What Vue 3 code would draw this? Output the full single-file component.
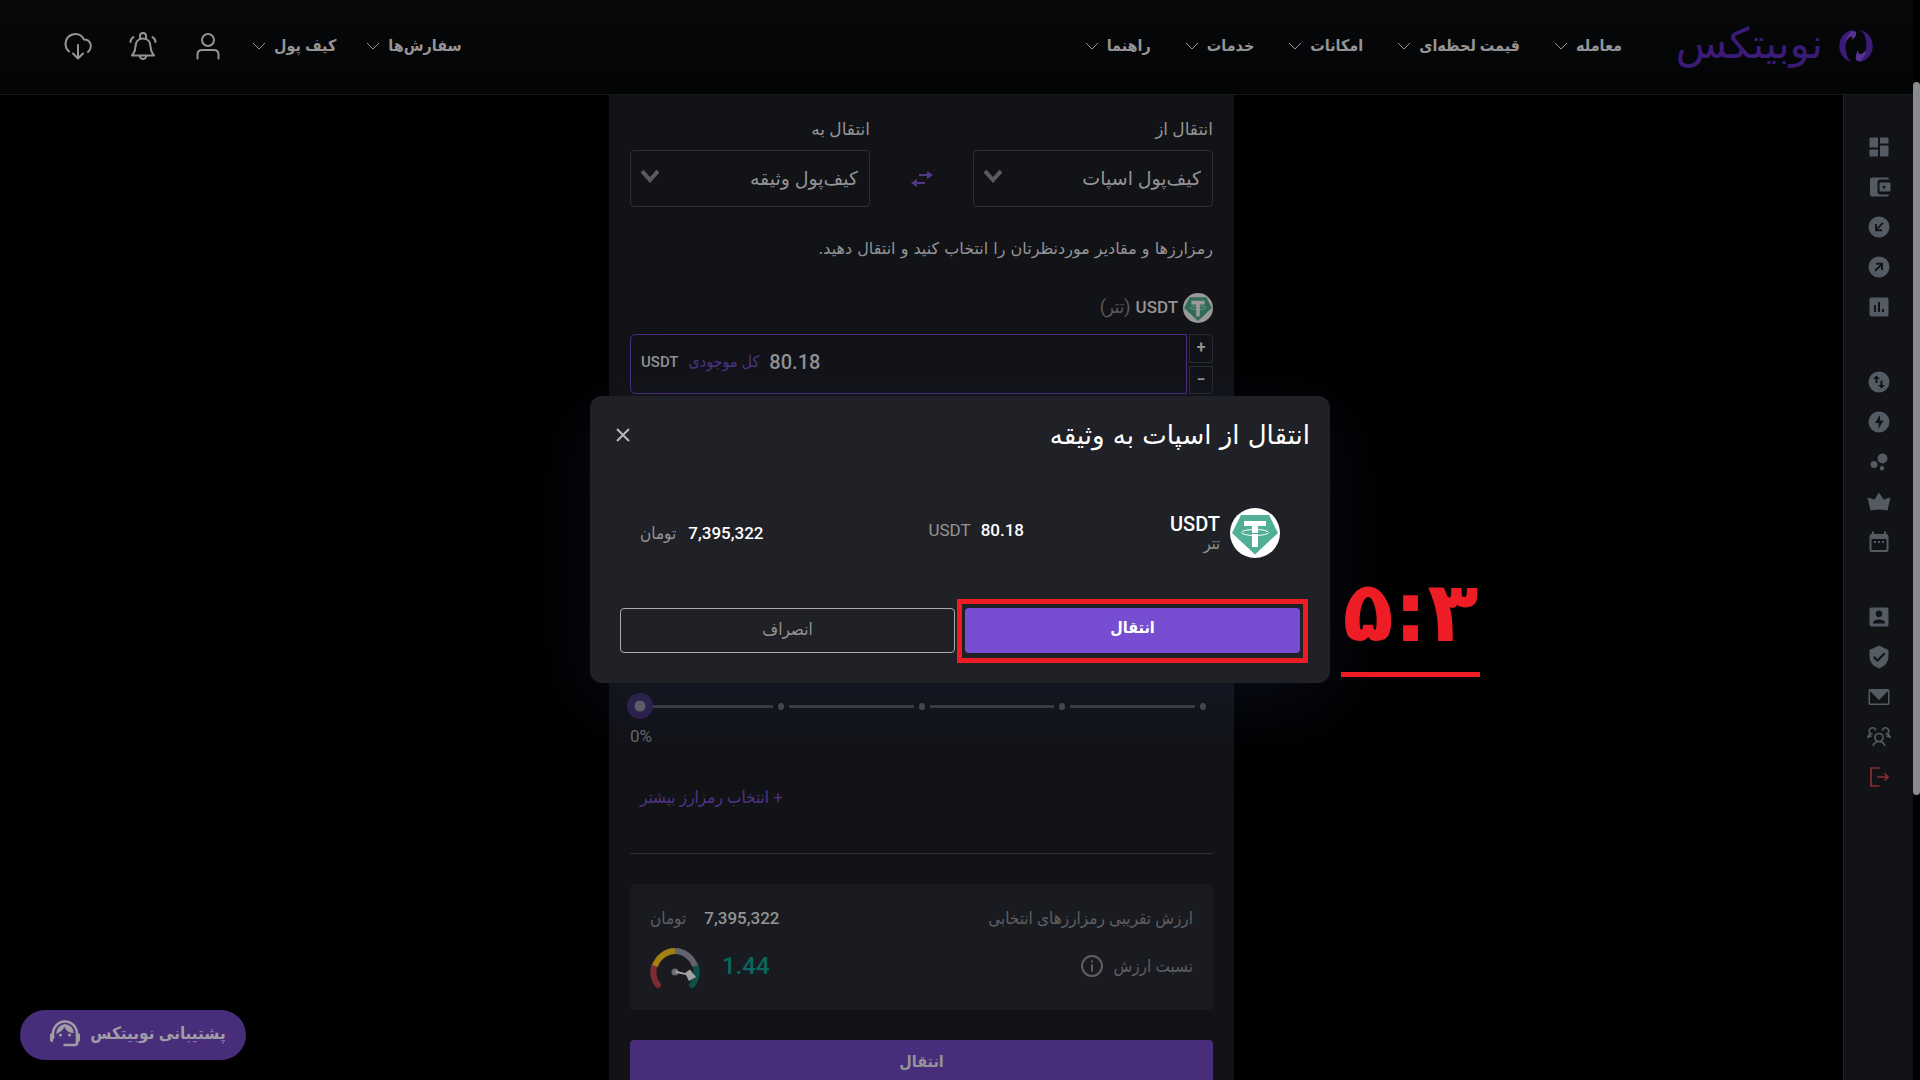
<script setup>
import { ref } from 'vue'

const mainNav = ['معامله', 'قیمت لحظه‌ای', 'امکانات', 'خدمات', 'راهنما']
const userNav = ['سفارش‌ها', 'کیف پول']

const sideGroups = [
  [
    { name: 'داشبورد', d: 'M3.500 2.500H11v10H2.500v-9q0-1 1-1zM13 2.500h7.500q1 0 1 1v5H13zM13 10.500h8.500v10q0 1-1 1H13zM2.500 14.500H11v7H3.500q-1 0-1-1z' },
    { name: 'کیف پول', d: 'M5 2.500h15q2 0 2 2h-8.500a3 3 0 0 0-3 3v9a3 3 0 0 0 3 3H22q0 2-2 2H5q-2 0-2-2v-15q0-2 2-2zM13.500 7.500h9q1 0 1 1v7q0 1-1 1h-9q-1 0-1-1v-7q0-1 1-1zM17 10.500a1.500 1.500 0 1 0 0 3a1.500 1.500 0 0 0 0-3z' },
    { name: 'واریز', d: 'M12 1.500a10.500 10.500 0 1 0 0 21a10.500 10.500 0 0 0 0-21zM15.200 7.200L16.600 8.600l-5.600 5.600H15v2H8V9h2v3.800z' },
    { name: 'برداشت', d: 'M12 1.500a10.500 10.500 0 1 0 0 21a10.500 10.500 0 0 0 0-21zM9 7.800h7V15h-2v-3.800L8.800 16.400 7.400 15l5.600-5.200H9z' },
    { name: 'گزارش', d: 'M4.500 2.500h15q2 0 2 2v15q0 2-2 2h-15q-2 0-2-2v-15q0-2 2-2zM7 10v7h2v-7zM11 7v10h2V7zM15 14v3h2v-3z' }
  ],
  [
    { name: 'تبدیل', d: 'M12 1.500a10.500 10.500 0 1 0 0 21a10.500 10.500 0 0 0 0-21zM6 9l3.500-3.500L13 9h-2.500v4h-2V9zM13.500 10.500v4.500H11l3.500 3.500L18 15h-2.500v-4.500z' },
    { name: 'برق‌آسا', d: 'M12 1.500a10.500 10.500 0 1 0 0 21a10.500 10.500 0 0 0 0-21zM13 5v5.500h3.500L11.500 19v-6H8z' },
    { name: 'استخر', d: 'M15.500 3.500a5 5 0 1 0 0 10a5 5 0 0 0 0-10zM7 11a3.500 3.500 0 1 0 0 7a3.500 3.500 0 0 0 0-7zM15 16a2.200 2.200 0 1 0 0 4.400a2.200 2.200 0 0 0 0-4.400z' },
    { name: 'باشگاه', d: 'M12 2.500l4.500 7L23.500 7.500l-3 13q-8.500-2-17 0l-3-13 7 2z' },
    { name: 'تقویم', d: 'M5 4V1.500h2V4h10V1.500h2V4q2.500 0 2.500 2v14q0 2-2 2h-15q-2 0-2-2V6q0-2 2.500-2zM4.500 9v11h15V9zM7 11h2v2H7zM11 11h2v2h-2zM15 11h2v2h-2z' }
  ],
  [
    { name: 'پروفایل', d: 'M4.500 2.500h15q2 0 2 2v15q0 2-2 2h-15q-2 0-2-2v-15q0-2 2-2zM12 5.500a3.200 3.200 0 1 0 0 6.400A3.200 3.200 0 0 0 12 5.500zM6 18.500h12v-1q-1-3-6-3t-6 3z' },
    { name: 'امنیت', d: 'M12 .500l9.500 4.500v6.500Q21.500 20 12 23.500 2.500 20 2.500 11.500V5zM7.500 11L6 12.500l4.500 4.500L18.500 9 17 7.500l-6.500 6.500z' },
    { name: 'پیام‌ها', d: 'M3 4h18q1.500 0 1.500 1.500v13q0 1.500-1.500 1.500H3q-1.500 0-1.500-1.500v-13Q1.500 4 3 4zM3 6v12.500h18V6l-9 9z' },
    { name: 'دعوت دوستان', line: 'M12 8.500a4 4 0 1 0 0 8a4 4 0 0 0 0-8M6 21q1.500-4.500 6-4.500t6 4.500M8.800 5.500A3.300 3.300 0 1 0 4 9Q1.500 9.500 1 12l3.500-1M15.200 5.500A3.300 3.300 0 1 1 20 9q2.500.500 3 3l-3.500-1' },
    { name: 'خروج', line: 'M12.500 3H4v18h8.500M10 12h11M17.500 8.500L21 12l-3.500 3.500', exit: true }
  ]
]

const from = ref('spot')
const to = ref('margin')
const amount = ref('80.18')
const percent = ref(0)
</script>

<template>
  <div class="page" dir="rtl">
    <header class="topbar">
      <a href="#" class="logo">
        <svg class="logo-mark" viewBox="0 0 34 32" aria-hidden="true">
          <path fill="#3b1a78" d="M13 0C-4 4-4 28 13 32 4 26 4 6 16 1zM21 32c17-4 17-28 0-32 9 6 9 26-3 31z" />
          <path fill="#56348f" d="M7 12C8 3 14-1 17 2q1 5-4 8c2-5-3-4-6 2zM27 20c-1 9-7 13-10 10q-1-5 2-10c0 6 4 5 8 0z" />
        </svg>
        <span class="logo-text">نوبیتکس</span>
      </a>
      <nav class="nav">
        <button v-for="item in mainNav" :key="item" class="nav-item" type="button">
          {{ item }}
          <svg class="chev" viewBox="0 0 14 8" aria-hidden="true"><path d="M1 1l6 6 6-6" /></svg>
        </button>
      </nav>
      <div class="user-area">
        <button v-for="item in userNav" :key="item" class="nav-item" type="button">
          {{ item }}
          <svg class="chev" viewBox="0 0 14 8" aria-hidden="true"><path d="M1 1l6 6 6-6" /></svg>
        </button>
        <div class="icons">
          <button class="icon-btn" type="button" aria-label="حساب کاربری">
            <svg viewBox="0 0 28 28"><circle cx="14" cy="8" r="6" /><path d="M3.500 26.500v-4q0-4.500 4.500-4.500h12q4.500 0 4.500 4.500v4" /></svg>
          </button>
          <button class="icon-btn" type="button" aria-label="اعلان‌ها">
            <svg viewBox="0 0 28 28"><path d="M14 6.500c-5 0-7.500 3.500-7.500 8 0 5-1.500 6-3.500 9h22c-2-3-3.500-4-3.500-9 0-4.500-2.500-8-7.500-8zM11 7V4q0-3 3-3t3 3v3M10.500 24q1 3 3.500 3t3.500-3M1.500 10q0-3 3-5M26.500 10q0-3-3-5" /></svg>
          </button>
          <button class="icon-btn" type="button" aria-label="دانلود">
            <svg viewBox="0 0 28 28"><path d="M5 19.500C-1 14 1 3 11 2q6-.500 9 5.500c7 0 9 8 4 12.500M14 13v13M9 21.500l5 5 5-5" /></svg>
          </button>
        </div>
      </div>
    </header>

    <div class="body">
      <aside class="sidebar">
        <div v-for="(group, i) in sideGroups" :key="i" class="side-group">
          <a v-for="icon in group" :key="icon.name" href="#" class="side-link" :class="{ exit: icon.exit }" :aria-label="icon.name">
            <svg viewBox="0 0 24 24">
              <path v-if="icon.d" :d="icon.d" fill="currentColor" fill-rule="evenodd" />
              <path v-else :d="icon.line" fill="none" stroke="currentColor" stroke-width="1.700" />
            </svg>
          </a>
        </div>
      </aside>

      <main class="main">
        <section class="panel">
          <div class="transfer-row">
            <div class="field">
              <label for="from">انتقال از</label>
              <div class="select-box">
                <select id="from" v-model="from"><option value="spot">کیف‌پول اسپات</option></select>
                <svg class="select-chev" viewBox="0 0 18 14" aria-hidden="true"><path d="M1 2l8 9 8-9" /></svg>
              </div>
            </div>
            <svg class="swap" viewBox="0 0 22 18" aria-hidden="true">
              <path d="M8 5h9M14 13H5" fill="none" stroke="#533888" stroke-width="2" />
              <path d="M16 1l6 4-6 4zM6 9l-6 4 6 4z" fill="#533888" />
            </svg>
            <div class="field">
              <label for="to">انتقال به</label>
              <div class="select-box">
                <select id="to" v-model="to"><option value="margin">کیف‌پول وثیقه</option></select>
                <svg class="select-chev" viewBox="0 0 18 14" aria-hidden="true"><path d="M1 2l8 9 8-9" /></svg>
              </div>
            </div>
          </div>

          <p class="hint">رمزارزها و مقادیر موردنظرتان را انتخاب کنید و انتقال دهید.</p>

          <label class="coin" for="amount">
            <svg class="coin-icon" viewBox="0 0 50 50" aria-hidden="true">
              <circle cx="25" cy="25" r="25" fill="#9a9a9a" />
              <path d="M11 7h28l9 18-23 21.500L2 25z" fill="#316c59" />
              <path d="M14 13h22v6h-8v20h-6V19h-8z" fill="#9a9a9a" />
              <ellipse cx="25" cy="24.500" rx="13" ry="3" fill="none" stroke="#9a9a9a" />
            </svg>
            <span class="coin-code">USDT</span>
            <span class="coin-name">(تتر)</span>
          </label>

          <div class="amount-row">
            <div class="steps">
              <button type="button" aria-label="افزایش">+</button>
              <button type="button" aria-label="کاهش">−</button>
            </div>
            <div class="amount-box" dir="ltr">
              <span class="unit">USDT</span>
              <button class="all" type="button">کل موجودی</button>
              <input id="amount" v-model="amount" type="text" />
            </div>
          </div>

          <div class="slider" dir="ltr">
            <div class="ticks">
              <span v-for="n in 4" :key="n" class="tick"></span>
            </div>
            <input v-model="percent" type="range" min="0" max="100" step="25" aria-label="درصد موجودی" />
          </div>
          <div class="percent" dir="ltr">{{ percent }}%</div>

          <button class="more" type="button">+ انتخاب رمزارز بیشتر</button>
          <hr class="divider" />

          <div class="summary">
            <div class="summary-row">
              <span>ارزش تقریبی رمزارزهای انتخابی</span>
              <span class="worth"><b>7,395,322</b> <span>تومان</span></span>
            </div>
            <div class="summary-row ratio-row">
              <span class="ratio-label">نسبت ارزش
                <svg class="info" viewBox="0 0 22 22" aria-hidden="true"><circle cx="11" cy="11" r="10" /><path d="M11 9.500v7M11 5.500v2" /></svg>
              </span>
              <span class="ratio"><strong>1.44</strong>
                <svg class="gauge" viewBox="0 0 50 42" aria-hidden="true">
                  <g fill="none" stroke-width="6">
                    <path d="M8 37Q1 29 4.500 17" stroke="#7d2b33" stroke-linecap="round" />
                    <path d="M42 37Q49 29 45.500 17" stroke="#0f5148" stroke-linecap="round" />
                    <path d="M5 18A21.500 21.500 0 0 1 25 3" stroke="#a38213" />
                    <path d="M25 3A21.500 21.500 0 0 1 45 18" stroke="#62636d" />
                  </g>
                  <circle cx="25" cy="24" r="3.500" fill="#6d6d70" />
                  <path d="M25 22.500l10 2.500 5-3.500 6 7.500-7 4-3-6-10-2z" fill="#a3a3a4" />
                </svg>
              </span>
            </div>
          </div>

          <button class="submit" type="button">انتقال</button>
        </section>
      </main>
    </div>

    <button class="support" type="button">
      پشتیبانی نوبیتکس
      <svg viewBox="0 0 30 28" aria-hidden="true">
        <path d="M3 20v-5a12 12.500 0 0 1 24 0v9q0 2-2 2H13.500" fill="none" stroke="#a09ca5" stroke-width="2.600" />
        <path d="M0 16q0-2 3-2v9q-3 0-3-2zM30 16q0-2-3-2v9q3 0 3-2z" fill="#a09ca5" />
        <path d="M6 15q1-9 9-10 8 1 9 9-7 0-9.500-6Q12 13 6 15z" fill="#a09ca5" />
        <circle cx="10.500" cy="16" r="1.600" fill="#a09ca5" /><circle cx="19.500" cy="16" r="1.600" fill="#a09ca5" />
      </svg>
    </button>

    <div class="scrollbar"><div class="scroll-thumb"></div></div>

    <div class="overlay">
      <div class="modal" role="dialog" aria-labelledby="modal-title">
        <div class="modal-head">
          <h2 id="modal-title">انتقال از اسپات به وثیقه</h2>
          <button class="close" type="button" aria-label="بستن">
            <svg viewBox="0 0 14 14"><path d="M1 1l12 12M13 1L1 13" /></svg>
          </button>
        </div>
        <div class="modal-row">
          <div class="asset">
            <svg class="asset-icon" viewBox="0 0 50 50" aria-hidden="true">
              <circle cx="25" cy="25" r="25" fill="#fff" />
              <path d="M11 7h28l9 18-23 21.500L2 25z" fill="#50af95" />
              <path d="M14 13h22v5h-8v21h-6V18h-8z" fill="#fff" />
              <ellipse cx="25" cy="24.500" rx="13.500" ry="3" fill="none" stroke="#fff" />
              <path d="M22 25.500h6" stroke="#50af95" />
            </svg>
            <div class="asset-text"><strong>USDT</strong><small>تتر</small></div>
          </div>
          <div class="qty"><b>80.18</b> <span>USDT</span></div>
          <div class="toman"><b>7,395,322</b> <span>تومان</span></div>
        </div>
        <div class="modal-actions">
          <div class="confirm-wrap"><button class="confirm" type="button">انتقال</button></div>
          <button class="cancel" type="button">انصراف</button>
        </div>
        <div class="step-note">۵:۳</div>
      </div>
    </div>
  </div>
</template>

<style>
body { margin: 0; background: #000; }
</style>

<style scoped>
* { box-sizing: border-box; }
.page {
  position: relative;
  height: 100vh;
  overflow: hidden;
  padding-right: 7px;
  display: flex;
  flex-direction: column;
  background: #000;
  color: #949496;
  font-family: Roboto, "DejaVu Sans Condensed", "DejaVu Sans", sans-serif;
  font-size: 17px;
  line-height: 24px;
}
button, select, input { font: inherit; color: inherit; background: none; border: 0; padding: 0; margin: 0; outline: 0; }
b, strong { font-weight: 500; }

.topbar {
  flex: none;
  height: 95px;
  padding: 0 40px 2px 64px;
  display: flex;
  align-items: center;
  background: linear-gradient(#07080a, #030404);
  border-bottom: 1px solid #15181d;
}
.logo { display: flex; align-items: center; gap: 16px; color: #3b1a78; text-decoration: none; }
.logo-mark { width: 34px; height: 32px; }
.logo-text { width: 146px; padding-bottom: 4px; font-family: "DejaVu Sans", sans-serif; font-size: 42px; line-height: 48px; white-space: nowrap; }
.nav { display: flex; gap: 34px; margin-right: 55px; }
.nav-item { display: flex; align-items: center; gap: 8px; font-weight: 700; font-size: 16px; white-space: nowrap; }
.chev { width: 14px; height: 8px; fill: none; stroke: #949496; stroke-width: 1; }
.user-area { display: flex; gap: 30px; margin-right: auto; align-items: center; }
.icons { display: flex; gap: 37px; }
.icon-btn { width: 28px; height: 28px; }
.icon-btn svg { display: block; width: 28px; height: 28px; fill: none; stroke: #949496; stroke-width: 2; stroke-linecap: round; stroke-linejoin: round; }

.body { flex: 1; min-height: 0; display: flex; }
.sidebar { flex: none; width: 70px; padding-top: 40px; background: #121317; border-left: 1px solid #202329; }
.side-group { display: flex; flex-direction: column; align-items: center; gap: 16px; margin-bottom: 51px; }
.side-link { color: #555b63; height: 24px; }
.side-link.exit { color: #8c2c36; }
.side-link svg { display: block; width: 24px; height: 24px; }

.main { flex: 1; display: flex; justify-content: center; }
.panel { width: 625px; padding: 22px 21px; background: #121317; }
.transfer-row { display: flex; justify-content: space-between; }
.field { width: 240px; font-family: Roboto, "DejaVu Sans", sans-serif; }
.field label { display: block; }
.select-box { position: relative; margin-top: 9px; }
.select-box select { appearance: none; width: 100%; height: 57px; padding: 0 11px; border: 1px solid #2d2f35; border-radius: 4px; font-size: 19px; }
.select-chev { position: absolute; left: 11px; top: 19px; width: 18px; height: 14px; fill: none; stroke: #5b5b5d; stroke-width: 4; }
.swap { width: 22px; height: 18px; margin-top: 53px; }
.hint { margin: 30px 0 0; font-family: "DejaVu Sans", sans-serif; font-size: 16px; white-space: nowrap; }
.coin { display: flex; align-items: center; gap: 5px; margin-top: 32px; height: 30px; font-size: 17px; }
.coin-icon { width: 30px; height: 30px; }
.coin-code { padding-bottom: 2px; font-weight: 500; }
.coin-name { color: #59595b; padding-bottom: 2px; font-size: 18px; }
.amount-row { display: flex; gap: 2px; margin-top: 11px; height: 60px; }
.steps { width: 24px; display: flex; flex-direction: column; gap: 3px; }
.steps button { flex: 1; border: 1px solid #2a2c31; font-weight: 700; font-size: 16px; line-height: 16px; }
.steps button:first-child { border-radius: 0 5px 0 0; }
.steps button:last-child { border-radius: 0 0 5px 0; }
.amount-box { flex: 1; display: flex; align-items: center; gap: 10px; padding: 0 10px 4px; border: 1px solid #4b2c86; border-radius: 6px 0 0 6px; }
.unit { font-size: 15px; font-weight: 500; }
.all { color: #4f3385; font-size: 16px; white-space: nowrap; }
.amount-box input { flex: 1; min-width: 0; font-size: 20px; font-weight: 500; }

.slider { position: relative; margin-top: 299px; height: 26px; }
.ticks { display: flex; height: 26px; margin: 0 10px; }
.tick { position: relative; flex: 1; }
.tick::before { content: ""; display: block; height: 3px; margin: 12px 8px 0; background: #3f4047; }
.tick::after { content: ""; position: absolute; right: -3px; top: 10px; width: 6px; height: 7px; border-radius: 50%; background: #4c4d54; }
.slider input { position: absolute; left: -3px; right: -3px; top: 0; width: calc(100% + 6px); height: 26px; appearance: none; }
.slider input::-webkit-slider-thumb { appearance: none; width: 26px; height: 26px; border-radius: 50%; background: radial-gradient(circle, #68666f 5px, #30224f 6px); }
.percent { margin-top: 5px; color: #6a6a6c; }
.more { display: block; margin: 37px auto 0 10px; color: #4f3385; white-space: nowrap; }
.divider { margin: 44px 0 30px; border: 0; border-top: 1px solid #2c2e33; }

.summary { display: flex; flex-direction: column; gap: 18px; height: 126px; padding: 22px 20px 0; border-radius: 5px; background: #1a1b20; color: #5f5f62; }
.summary-row { display: flex; justify-content: space-between; align-items: center; white-space: nowrap; }
.worth { display: flex; gap: 18px; }
.worth b { color: #949496; font-size: 17px; }
.ratio-row { height: 42px; }
.ratio-label, .ratio { display: flex; align-items: center; gap: 11px; }
.ratio-label { padding-bottom: 6px; }
.ratio { gap: 22px; }
.ratio strong { color: #08685f; font-size: 24px; padding-bottom: 6px; }
.info { width: 22px; height: 22px; fill: none; stroke: #5f5f62; stroke-width: 2; }
.gauge { width: 50px; height: 42px; }
.submit { display: block; width: 100%; height: 45px; margin-top: 30px; padding-bottom: 2px; border-radius: 4px; background: #482d7b; font-weight: 700; font-size: 16px; }

.support {
  position: absolute; left: 20px; bottom: 20px;
  display: flex; align-items: center; justify-content: center; gap: 10px;
  width: 226px; height: 50px; padding: 0 20px 4px 30px;
  border-radius: 25px; background: #482d7b; color: #a09ca5;
  font-weight: 700; white-space: nowrap;
}
.support svg { flex: none; width: 30px; height: 28px; }
.scrollbar { position: absolute; right: 0; top: 0; bottom: 0; width: 7px; background: #000; display: flex; flex-direction: column; }
.scroll-thumb { margin-top: 82px; height: 66%; border-radius: 4px; background: #8a8b91; }

.overlay { position: absolute; inset: 0; display: flex; align-items: center; justify-content: center; }
.modal { position: relative; width: 740px; height: 287px; margin-bottom: 1px; padding: 24px 20px 30px 30px; border-radius: 12px; background: #202126; box-shadow: 0 20px 80px rgba(30, 36, 70, 0.35); color: #949496; display: flex; flex-direction: column; }
.modal-head { display: flex; justify-content: space-between; align-items: center; height: 30px; }
.modal-head h2 { margin: 0; font-family: "DejaVu Sans", sans-serif; font-size: 26px; line-height: 30px; font-weight: 500; color: #fff; white-space: nowrap; }
.close { width: 24px; height: 24px; padding: 5px; margin-left: -9px; }
.close svg { display: block; width: 14px; height: 14px; fill: none; stroke: #b9b9bb; stroke-width: 2; }
.modal-row { display: flex; align-items: center; height: 50px; margin: 58px 30px 0 20px; }
.modal-row b { color: #fff; font-size: 17px; }
.asset { display: flex; align-items: center; gap: 10px; flex: 0 0 256px; }
.asset-icon { width: 50px; height: 50px; }
.asset-text { display: flex; flex-direction: column; padding-bottom: 2px; }
.asset-text strong { color: #fff; font-size: 20px; line-height: 24px; }
.asset-text small { font-size: 16px; line-height: 16px; }
.qty, .toman { display: flex; gap: 10px; white-space: nowrap; }
.qty { padding-bottom: 6px; }
.toman { margin-right: auto; gap: 12px; }
.modal-actions { display: flex; gap: 2px; margin: auto 2px 0 0; align-items: center; height: 45px; }
.confirm-wrap { flex: 1; height: 64px; padding: 4px 3px; border: 5px solid #ee1c25; }
.confirm, .cancel { height: 45px; padding-bottom: 4px; border-radius: 4px; }
.confirm { width: 100%; background: #774ed1; color: #fff; font-weight: 700; font-size: 16px; }
.cancel { width: 335px; border: 1px solid #a9a9ab; }
.step-note { position: absolute; left: calc(100% + 11px); top: 160px; width: 139px; height: 121px; border-bottom: 5px solid #ee1c25; color: #ee1c25; font-family: "DejaVu Sans", sans-serif; font-size: 84px; font-weight: 700; line-height: 112px; display: flex; justify-content: center; }
</style>
